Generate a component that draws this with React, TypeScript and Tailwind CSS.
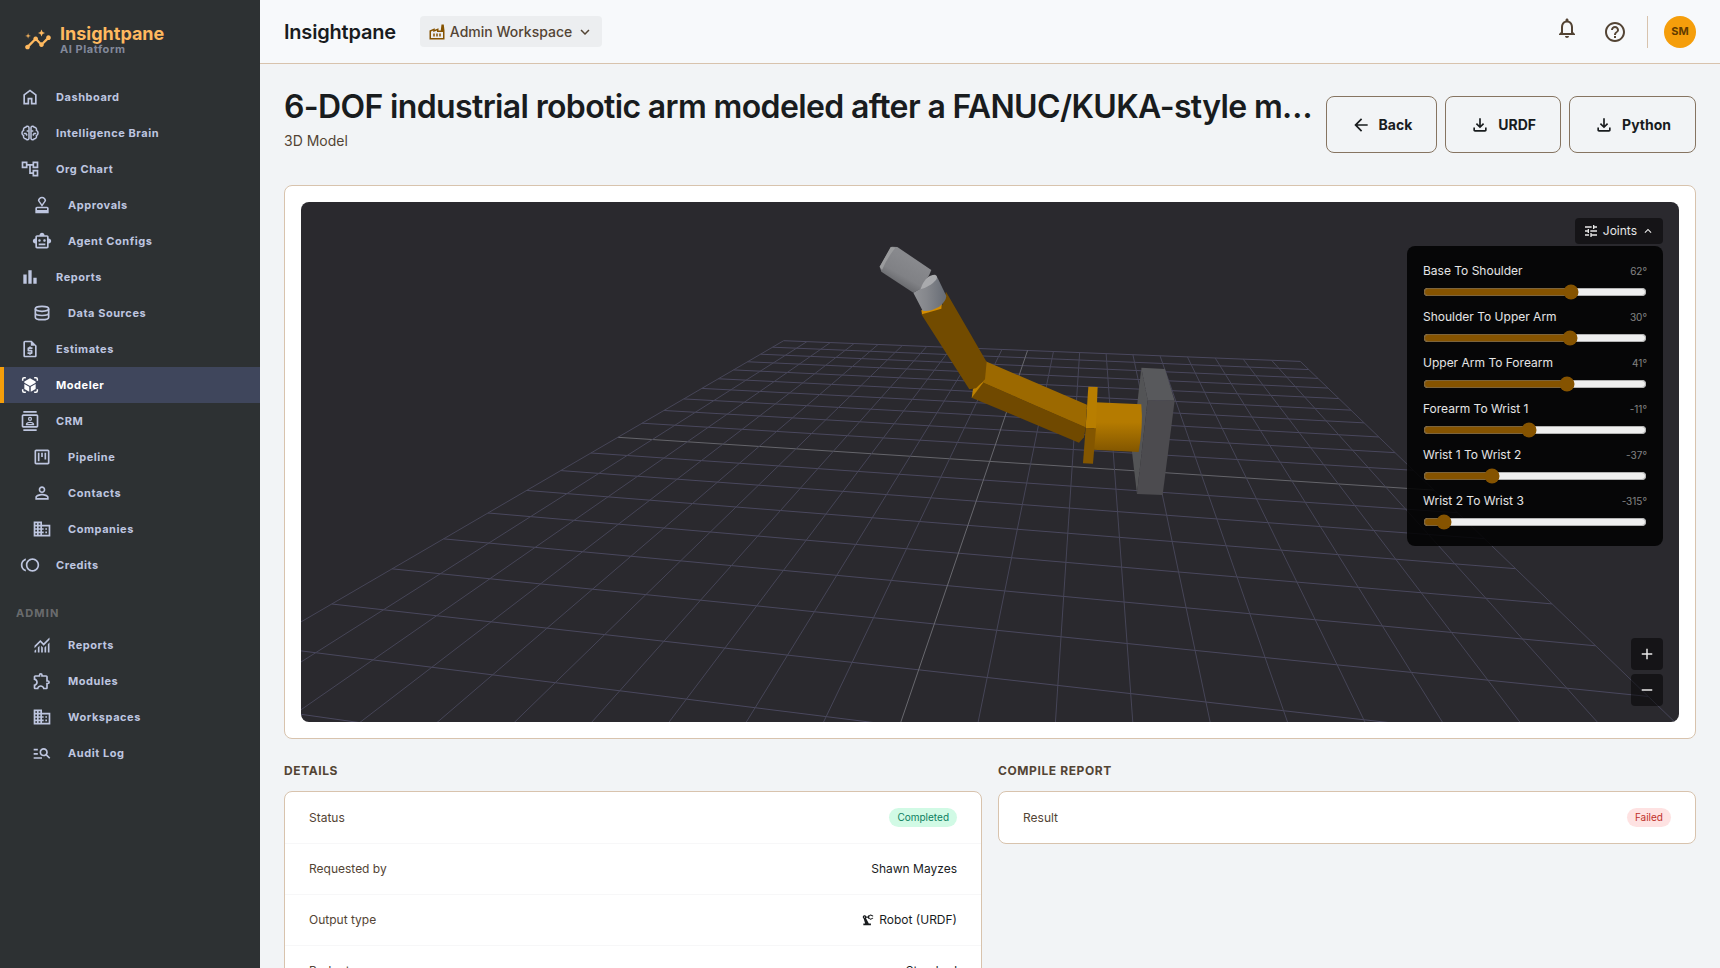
import { useState, type ReactNode } from "react";
import type { IconType } from "react-icons";
import {
  MdAdd,
  MdArrowBack,
  MdBarChart,
  MdDomain,
  MdExpandLess,
  MdExpandMore,
  MdHelpOutline,
  MdInsights,
  MdManageSearch,
  MdNotificationsNone,
  MdOutlineAccountTree,
  MdOutlineApproval,
  MdOutlineContacts,
  MdOutlineExtension,
  MdOutlineFactory,
  MdOutlineRequestQuote,
  MdOutlineSmartToy,
  MdOutlineToll,
  MdOutlineViewKanban,
  MdPersonOutline,
  MdPrecisionManufacturing,
  MdRemove,
  MdTune,
} from "react-icons/md";
import { clsx } from "clsx";

type IconProps = { size?: number; className?: string };

type NavItem = {
  label: string;
  icon: IconType | ((props: IconProps) => ReactNode);
  nested?: boolean;
  active?: boolean;
};

type Joint = { name: string; value: number; limit: number };

// Material Symbols use a 960 unit box with a negative y axis
const symbol = (d: string) =>
  function SymbolIcon({ size = 20, className }: IconProps) {
    return (
      <svg width={size} height={size} viewBox="0 -960 960 960" fill="currentColor" className={className}>
        <path d={d} />
      </svg>
    );
  };

const HomeIcon = symbol(
  "M240-200h120v-240h240v240h120v-360L480-740 240-560v360Zm-80 80v-480l320-240 320 240v480H520v-240h-80v240H160Z"
);

const DownloadIcon = symbol(
  "M480-320 280-520l56-58 104 104v-326h80v326l104-104 56 58-200 200ZM240-160q-33 0-56.5-23.5T160-240v-120h80v120h480v-120h80v120q0 33-23.5 56.5T720-160H240Z"
);

const MonitoringIcon = symbol(
  "M120-120v-80l80-80v160h-80Zm160 0v-240l80-80v320h-80Zm160 0v-320l80 81v239h-80Zm160 0v-239l80-80v319h-80Zm160 0v-400l80-80v480h-80ZM120-327v-113l280-280 160 160 280-280v113L560-447 400-607 120-327Z"
);

function BrainIcon({ size = 20, className }: IconProps) {
  return (
    <svg width={size} height={size} viewBox="0 0 24 24" fill="none" stroke="currentColor" strokeWidth="1.8" className={className}>
      <path d="M10.800 5.500A2 2 0 0 0 7 5a2.900 2.900 0 0 0-2.700 3.800 3.600 3.600 0 0 0 0 6.400A2.900 2.900 0 0 0 7 19a2 2 0 0 0 3.800-.5Z" />
      <path d="M13.200 5.500A2 2 0 0 1 17 5a2.900 2.900 0 0 1 2.700 3.800 3.600 3.600 0 0 1 0 6.400A2.900 2.900 0 0 1 17 19a2 2 0 0 1-3.800-.5Z" />
      <path d="M10.500 9.500H8M4.500 12.500H7L8.500 15M13.500 9.500H16M19.500 12.500H17L15.500 15" />
    </svg>
  );
}

function DatabaseIcon({ size = 20, className }: IconProps) {
  return (
    <svg width={size} height={size} viewBox="0 0 24 24" fill="none" stroke="currentColor" strokeWidth="2" className={className}>
      <ellipse cx="12" cy="7" rx="8" ry="3" />
      <path d="M4 7v10c0 1.700 3.600 3 8 3s8-1.300 8-3V7M4 12c0 1.700 3.600 3 8 3s8-1.300 8-3" />
    </svg>
  );
}

function CubeIcon({ size = 20, className }: IconProps) {
  return (
    <svg width={size} height={size} viewBox="0 0 24 24" fill="none" className={className}>
      <path
        stroke="currentColor"
        strokeWidth="1.800"
        d="M3.200 7V5A1.800 1.800 0 0 1 5 3.200h2M17 3.200h2A1.800 1.800 0 0 1 20.800 5v2M20.800 17v2a1.800 1.800 0 0 1-1.800 1.800h-2M7 20.800H5A1.800 1.800 0 0 1 3.200 19v-2"
      />
      <path fill="currentColor" d="M12 4 18.800 7.900v1.300L12 13.100 5.200 9.200V7.900Z" />
      <path fill="currentColor" d="M5.200 10.800 11.100 14.200v5.900L5.200 16.700ZM18.800 10.800 12.900 14.200v5.900l5.900-3.400Z" />
    </svg>
  );
}

const mainNav: NavItem[] = [
  { label: "Dashboard", icon: HomeIcon },
  { label: "Intelligence Brain", icon: BrainIcon },
  { label: "Org Chart", icon: MdOutlineAccountTree },
  { label: "Approvals", icon: MdOutlineApproval, nested: true },
  { label: "Agent Configs", icon: MdOutlineSmartToy, nested: true },
  { label: "Reports", icon: MdBarChart },
  { label: "Data Sources", icon: DatabaseIcon, nested: true },
  { label: "Estimates", icon: MdOutlineRequestQuote },
  { label: "Modeler", icon: CubeIcon, active: true },
  { label: "CRM", icon: MdOutlineContacts },
  { label: "Pipeline", icon: MdOutlineViewKanban, nested: true },
  { label: "Contacts", icon: MdPersonOutline, nested: true },
  { label: "Companies", icon: MdDomain, nested: true },
  { label: "Credits", icon: MdOutlineToll },
];

const adminNav: NavItem[] = [
  { label: "Reports", icon: MonitoringIcon, nested: true },
  { label: "Modules", icon: MdOutlineExtension, nested: true },
  { label: "Workspaces", icon: MdDomain, nested: true },
  { label: "Audit Log", icon: MdManageSearch, nested: true },
];

const initialJoints: Joint[] = [
  { name: "Base To Shoulder", value: 62, limit: 180 },
  { name: "Shoulder To Upper Arm", value: 30, limit: 90 },
  { name: "Upper Arm To Forearm", value: 41, limit: 135 },
  { name: "Forearm To Wrist 1", value: -11, limit: 180 },
  { name: "Wrist 1 To Wrist 2", value: -37, limit: 90 },
  { name: "Wrist 2 To Wrist 3", value: -315, limit: 360 },
];

function NavLink({ item }: { item: NavItem }) {
  const Icon = item.icon;

  return (
    <a
      href="#"
      className={clsx(
        "flex h-9 items-center gap-4 border-l-4 text-[11px] font-bold tracking-wider",
        item.nested ? "pl-7" : "pl-4",
        item.active ? "border-[#f59e0b] bg-[#3f465c] text-white" : "border-transparent text-[#bec6e0]"
      )}
    >
      <Icon size={20} className="shrink-0" />
      {item.label}
    </a>
  );
}

function Sidebar() {
  return (
    <aside className="flex w-65 shrink-0 flex-col bg-[#2d3133] pt-6">
      <div className="mb-[23px] flex items-center gap-2 px-6">
        <MdInsights size={28} className="text-[#ffb95f]" />
        <div>
          <p className="text-lg leading-[19px] font-bold text-[#ffb95f]">Insightpane</p>
          <p className="text-[11px] leading-[13px] font-bold tracking-wider text-[#bec6e0]/60">AI Platform</p>
        </div>
      </div>
      <nav>
        {mainNav.map((item) => (
          <NavLink key={item.label} item={item} />
        ))}
        <p className="mt-6 mb-2 px-4 text-[11px] leading-3 font-bold tracking-widest text-white/30">ADMIN</p>
        {adminNav.map((item) => (
          <NavLink key={item.label} item={item} />
        ))}
      </nav>
    </aside>
  );
}

function TopBar() {
  return (
    <header className="flex h-16 shrink-0 items-center border-b border-[#d8c3ad] bg-[#f7f9fb] px-6">
      <span className="text-xl font-semibold tracking-[-0.01em]">Insightpane</span>
      <button className="ml-6 flex h-[31px] items-center gap-1 rounded bg-[#eceef0] px-2 text-sm font-medium text-[#534434]">
        <MdOutlineFactory size={18} className="text-[#855300]" />
        Admin Workspace
        <MdExpandMore size={18} />
      </button>
      <div className="ml-auto flex items-center gap-4 text-[#534434]">
        <button aria-label="Notifications" className="flex size-8 items-start justify-center">
          <MdNotificationsNone size={24} />
        </button>
        <button aria-label="Help" className="flex size-8 items-center justify-center">
          <MdHelpOutline size={24} />
        </button>
        <div className="h-8 w-px bg-[#d8c3ad]" />
        <button className="size-8 rounded-full bg-[#f59e0b] text-[11px] font-bold text-[#613b00]">SM</button>
      </div>
    </header>
  );
}

function ActionButton({ icon, children }: { icon: ReactNode; children: ReactNode }) {
  return (
    <button className="flex h-[57px] items-center gap-2 rounded-lg border border-[#867461] px-6 text-sm font-bold">
      {icon}
      {children}
    </button>
  );
}

// perspective projection of a 20 x 20 floor grid
function project(i: number, j: number) {
  const w = 1 - 0.0053 * i - 0.03496 * j;
  return {
    x: (20.535 * i - 27.66 * j + 482.7) / w,
    y: (0.191 * i + 1.434 * j + 138.7) / w,
  };
}

function FloorGrid() {
  const steps = Array.from({ length: 21 }, (_, n) => n);
  const line = (key: string, from: { x: number; y: number }, to: { x: number; y: number }, stroke: string) => (
    <line key={key} x1={from.x} y1={from.y} x2={to.x} y2={to.y} stroke={stroke} />
  );

  return (
    <g>
      {steps.map((n) => line(`r${n}`, project(0, n), project(20, n), n === 10 ? "#65656b" : "#4a485e"))}
      {steps.map((n) => line(`c${n}`, project(n, 0), project(n, 20), n === 10 ? "#68686e" : "#464557"))}
    </g>
  );
}

function RobotArm() {
  return (
    <g transform="translate(539 18) scale(0.3333)">
      <defs>
        <linearGradient id="shoulder" x1="0" y1="0" x2="0" y2="1">
          <stop offset="0.4" stopColor="#b57b00" />
          <stop offset="1" stopColor="#825600" />
        </linearGradient>
        <linearGradient id="wrist1" x1="0" y1="0" x2="1" y2="0">
          <stop offset="0" stopColor="#929397" />
          <stop offset="0.4" stopColor="#85878c" />
          <stop offset="1" stopColor="#666b74" />
        </linearGradient>
        <linearGradient id="wrist2" x1="0.65" y1="0.3" x2="0.3" y2="0.85">
          <stop offset="0" stopColor="#88898d" />
          <stop offset="0.6" stopColor="#808185" />
          <stop offset="1" stopColor="#636468" />
        </linearGradient>
      </defs>
      {/* base */}
      <path fill="#535456" d="M904 443 923 540 891 822 876 695Z" />
      <path fill="#58595c" d="M904 443 975 447 1004 542 923 540Z" />
      <path fill="#4c4b4f" d="M923 540 1004 542 968 825 891 822Z" />
      {/* shoulder */}
      <path fill="url(#shoulder)" d="M766 547 904 553Q910 620 896 696L759 689Z" />
      <path fill="#b87e00" d="M745 500 773 501 768 625 737 624Z" />
      <path fill="#835600" d="M737 624 768 625 759 731 729 730Z" />
      {/* upper arm */}
      <path fill="#9c6900" d="M437 424 741 554 737 623 428 488Z" />
      <path fill="#704900" d="M428 487 737 622 732 652 717 668 395 533Z" />
      <path fill="#bd8100" d="M430 484 428 490 395 534 399 506Z" />
      {/* forearm */}
      <path fill="#724b00" d="M318 215 440 426 435 478 408 505 388 508 244 283 305 262Z" />
      <path fill="#d48d00" d="M244 271 306 252 304 266 246 283Z" />
      {/* wrist */}
      <path fill="url(#wrist1)" d="M220 218 240 206 292 172 319 228Q318 244 298 260 270 276 248 272Z" />
      <path fill="url(#wrist2)" d="M155 80 172 81 274 150 268 164 241 207 220 218 124 155 119 140Z" />
      <path fill="#9a9b9d" d="M152 81 166 83Q140 116 126 150L119 140Z" />
      <path fill="#a9aaad" d="M241 208Q256 164 285 164 302 172 272 194 256 204 241 208Z" />
    </g>
  );
}

function JointPanel() {
  const [joints, setJoints] = useState(initialJoints);

  const handleChange = (name: string, value: number) => {
    setJoints((prev) => prev.map((joint) => (joint.name === name ? { ...joint, value } : joint)));
  };

  return (
    <div className="flex w-64 flex-col gap-2 rounded-lg bg-black/85 p-4">
      {joints.map((joint) => (
        <label key={joint.name} className="flex flex-col gap-1">
          <span className="flex items-center justify-between text-xs leading-[18px] text-white/90">
            {joint.name}
            <span className="text-[10px] text-white/50">{joint.value}°</span>
          </span>
          <input
            type="range"
            min={-joint.limit}
            max={joint.limit}
            value={joint.value}
            onChange={(e) => handleChange(joint.name, Number(e.target.value))}
            className="m-0 h-4 w-full accent-[#855300]"
          />
        </label>
      ))}
    </div>
  );
}

function ModelViewer() {
  const [open, setOpen] = useState(true);

  return (
    <section className="rounded-lg border border-[#d8c3ad] bg-white p-4">
      <div className="relative h-[520px] overflow-hidden rounded-lg bg-[#2a292e]">
        <svg viewBox="0 0 1378 520" preserveAspectRatio="xMidYMid slice" className="size-full">
          <FloorGrid />
          <RobotArm />
        </svg>
        <div className="absolute top-4 right-4 flex flex-col items-end gap-0.5">
          <button
            onClick={() => setOpen(!open)}
            className="flex h-[26px] items-center gap-1 rounded bg-black/50 px-2 text-xs text-white/90"
          >
            <MdTune size={16} />
            Joints
            <MdExpandLess size={14} />
          </button>
          {open && <JointPanel />}
        </div>
        <div className="absolute right-4 bottom-4 flex flex-col gap-1 text-white/90">
          <button aria-label="Zoom in" className="flex size-8 items-center justify-center rounded bg-black/50">
            <MdAdd size={18} />
          </button>
          <button aria-label="Zoom out" className="flex size-8 items-center justify-center rounded bg-black/50">
            <MdRemove size={18} />
          </button>
        </div>
      </div>
    </section>
  );
}

function InfoCard({ title, rows }: { title: string; rows: { label: string; value: ReactNode }[] }) {
  return (
    <section>
      <h2 className="mb-3 text-xs leading-4 font-bold tracking-wider text-[#534434]">{title}</h2>
      <dl className="divide-y divide-[#f7f7f8] rounded-lg border border-[#d8c3ad] bg-white text-xs leading-[18px]">
        {rows.map((row) => (
          <div key={row.label} className="flex items-center justify-between px-6 py-4">
            <dt className="text-[#534434]">{row.label}</dt>
            <dd className="flex items-center gap-1">{row.value}</dd>
          </div>
        ))}
      </dl>
    </section>
  );
}

export default function App() {
  return (
    <div className="flex h-screen overflow-hidden bg-[#f2f4f6] font-['Inter',sans-serif] text-[#191c1e]">
      <Sidebar />
      <div className="flex min-w-0 flex-1 flex-col">
        <TopBar />
        <main className="flex-1 overflow-y-auto p-6 [scrollbar-width:none]">
          <div className="mb-6 flex items-center justify-between gap-3">
            <div className="min-w-0 pb-2.5">
              <h1 className="truncate text-[32px] leading-[38px] font-semibold tracking-[-0.02em]">
                6-DOF industrial robotic arm modeled after a FANUC/KUKA-style m…
              </h1>
              <p className="mt-1 text-sm leading-[21px] text-[#534434]">3D Model</p>
            </div>
            <div className="flex shrink-0 gap-2">
              <ActionButton icon={<MdArrowBack size={20} />}>Back</ActionButton>
              <ActionButton icon={<DownloadIcon size={20} />}>URDF</ActionButton>
              <ActionButton icon={<DownloadIcon size={20} />}>Python</ActionButton>
            </div>
          </div>
          <ModelViewer />
          <div className="mt-6 grid grid-cols-2 items-start gap-4">
            <InfoCard
              title="DETAILS"
              rows={[
                {
                  label: "Status",
                  value: (
                    <span className="rounded-full bg-[#d1fae5] px-2 text-[10px] leading-[19px] text-[#0b7f5f]">
                      Completed
                    </span>
                  ),
                },
                { label: "Requested by", value: "Shawn Mayzes" },
                {
                  label: "Output type",
                  value: (
                    <>
                      <MdPrecisionManufacturing size={14} />
                      Robot (URDF)
                    </>
                  ),
                },
                { label: "Budget", value: "Standard" },
              ]}
            />
            <InfoCard
              title="COMPILE REPORT"
              rows={[
                {
                  label: "Result",
                  value: (
                    <span className="rounded-full bg-[#fee2e2] px-2 text-[10px] leading-[19px] text-[#c0302a]">
                      Failed
                    </span>
                  ),
                },
              ]}
            />
          </div>
        </main>
      </div>
    </div>
  );
}
